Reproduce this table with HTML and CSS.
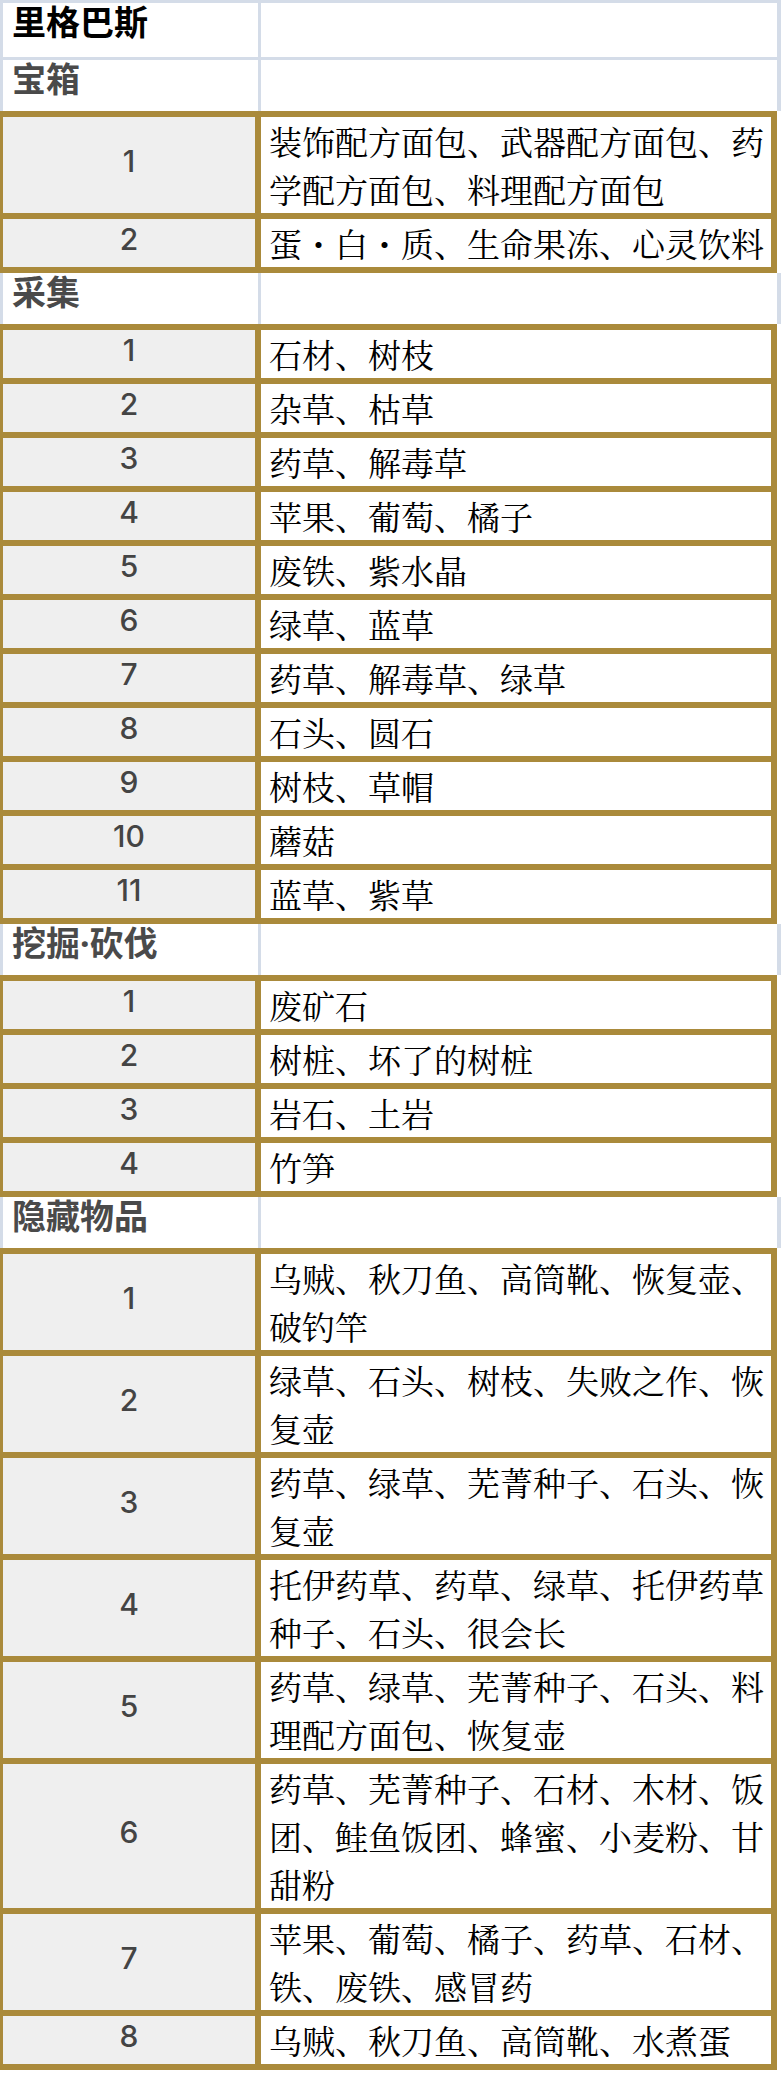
FILE: index.html
```html
<!DOCTYPE html>
<html lang="zh-CN">
<head>
<meta charset="utf-8">
<title>里格巴斯</title>
<link rel="stylesheet" href="styles.css">
</head>
<body>
<div class="sheet">
  <div class="head head-first">
    <div class="head-cell title">里格巴斯</div>
    <div class="head-cell"></div>
  </div>

  <div class="head">
    <div class="head-cell">宝箱</div>
    <div class="head-cell"></div>
  </div>
  <div class="rows">
    <div class="row"><div class="num">1</div><div class="items">装饰配方面包、武器配方面包、药学配方面包、料理配方面包</div></div>
    <div class="row"><div class="num">2</div><div class="items">蛋・白・质、生命果冻、心灵饮料</div></div>
  </div>

  <div class="head">
    <div class="head-cell">采集</div>
    <div class="head-cell"></div>
  </div>
  <div class="rows">
    <div class="row"><div class="num">1</div><div class="items">石材、树枝</div></div>
    <div class="row"><div class="num">2</div><div class="items">杂草、枯草</div></div>
    <div class="row"><div class="num">3</div><div class="items">药草、解毒草</div></div>
    <div class="row"><div class="num">4</div><div class="items">苹果、葡萄、橘子</div></div>
    <div class="row"><div class="num">5</div><div class="items">废铁、紫水晶</div></div>
    <div class="row"><div class="num">6</div><div class="items">绿草、蓝草</div></div>
    <div class="row"><div class="num">7</div><div class="items">药草、解毒草、绿草</div></div>
    <div class="row"><div class="num">8</div><div class="items">石头、圆石</div></div>
    <div class="row"><div class="num">9</div><div class="items">树枝、草帽</div></div>
    <div class="row"><div class="num">10</div><div class="items">蘑菇</div></div>
    <div class="row"><div class="num">11</div><div class="items">蓝草、紫草</div></div>
  </div>

  <div class="head">
    <div class="head-cell">挖掘·砍伐</div>
    <div class="head-cell"></div>
  </div>
  <div class="rows">
    <div class="row"><div class="num">1</div><div class="items">废矿石</div></div>
    <div class="row"><div class="num">2</div><div class="items">树桩、坏了的树桩</div></div>
    <div class="row"><div class="num">3</div><div class="items">岩石、土岩</div></div>
    <div class="row"><div class="num">4</div><div class="items">竹笋</div></div>
  </div>

  <div class="head">
    <div class="head-cell">隐藏物品</div>
    <div class="head-cell"></div>
  </div>
  <div class="rows">
    <div class="row"><div class="num">1</div><div class="items">乌贼、秋刀鱼、高筒靴、恢复壶、破钓竿</div></div>
    <div class="row"><div class="num">2</div><div class="items">绿草、石头、树枝、失败之作、恢复壶</div></div>
    <div class="row"><div class="num">3</div><div class="items">药草、绿草、芜菁种子、石头、恢复壶</div></div>
    <div class="row"><div class="num">4</div><div class="items">托伊药草、药草、绿草、托伊药草种子、石头、很会长</div></div>
    <div class="row"><div class="num">5</div><div class="items">药草、绿草、芜菁种子、石头、料理配方面包、恢复壶</div></div>
    <div class="row"><div class="num">6</div><div class="items">药草、芜菁种子、石材、木材、饭团、鲑鱼饭团、蜂蜜、小麦粉、甘甜粉</div></div>
    <div class="row"><div class="num">7</div><div class="items">苹果、葡萄、橘子、药草、石材、铁、废铁、感冒药</div></div>
    <div class="row"><div class="num">8</div><div class="items">乌贼、秋刀鱼、高筒靴、水煮蛋</div></div>
  </div>
</div>
</body>
</html>
```

FILE: styles.css
```css
html, body {
  margin: 0;
  padding: 0;
  background: #ffffff;
}

.sheet {
  width: 781px;
}

/* section header rows (light blue frame) */
.head {
  display: grid;
  grid-template-columns: 255px 1fr;
  border-left: 3px solid #d4dce8;
  border-right: 4px solid #d4dce8;
  background: #ffffff;
}

.head-first {
  border-top: 3px solid #d4dce8;
  border-bottom: 3px solid #d4dce8;
}

.head-cell {
  height: 38px;
  padding: 0 0 13px 9px;
  line-height: 38px;
  font-family: "Noto Sans", "Noto Sans CJK SC", sans-serif;
  font-weight: 700;
  font-size: 34px;
  color: #4a4a4a;
  white-space: nowrap;
}

.head-cell + .head-cell {
  border-left: 3px solid #d4dce8;
}

.head-first .head-cell {
  height: 41px;
  padding-bottom: 13px;
}

.head-cell.title {
  color: #000000;
}

/* gold framed item rows */
.rows {
  margin-right: 4px;
  border-bottom: 6px solid #aa8a3b;
}

.row {
  display: grid;
  grid-template-columns: 258px 1fr;
  border-top: 6px solid #aa8a3b;
  border-left: 3px solid #aa8a3b;
  border-right: 6px solid #aa8a3b;
}

.num {
  display: flex;
  align-items: center;
  justify-content: center;
  padding-bottom: 9px;
  background: #efefef;
  border-right: 6px solid #aa8a3b;
  font-family: Inter, "Noto Sans", sans-serif;
  font-weight: 500;
  font-size: 30px;
  color: #444444;
}

.items {
  padding: 0 4px 0 8px;
  background: #ffffff;
  font-family: "Noto Serif CJK SC", "AR PL UMing CN", "Source Han Serif SC", serif;
  font-size: 33px;
  line-height: 48px;
  color: #000000;
}
```
